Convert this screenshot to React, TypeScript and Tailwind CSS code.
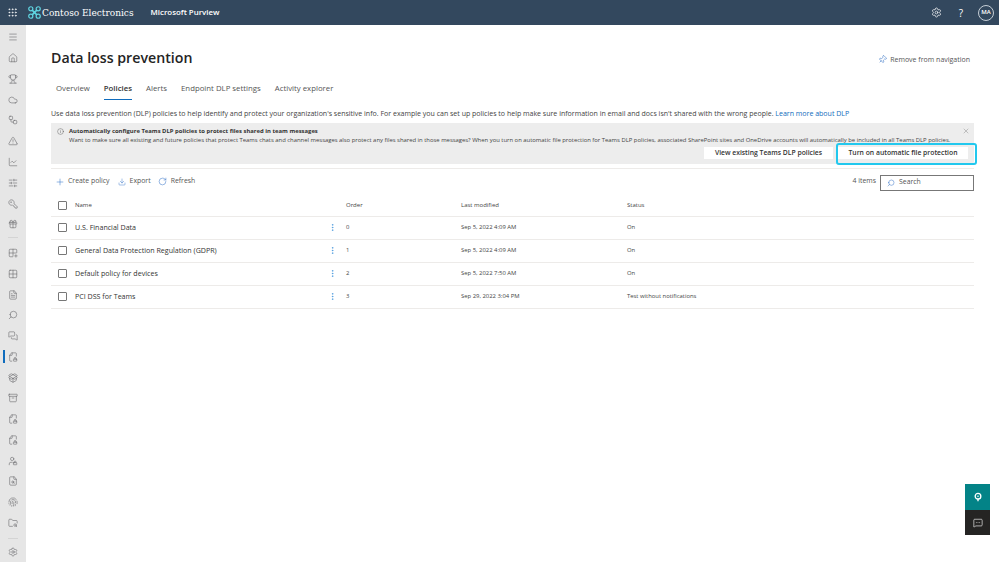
import {
  Archive, ChartLine, Cloud, FileLock2, FileSearch, FileText, Fingerprint, FolderSearch, Gift, Grid2x2, Grid2x2Plus,
  Grip, House, Info, KeyRound, Menu, MessageSquareMore, Pin, Plus, Download, RotateCw, Search, Settings,
  SlidersHorizontal, Trophy, TriangleAlert, UserLock, Workflow, X, MessagesSquare, PackageOpen, EllipsisVertical,
} from "lucide-react";

const topIcons = [House, Trophy, Cloud, Workflow, TriangleAlert, ChartLine, SlidersHorizontal, KeyRound, Gift];
const midIcons = [Grid2x2Plus, Grid2x2, FileText, Search, MessagesSquare];
const lowIcons = [PackageOpen, Archive, FileLock2, FileLock2, UserLock, FileSearch, Fingerprint, FolderSearch];
const flipped = [KeyRound, Search, FileLock2];

const policies = [
  { name: "U.S. Financial Data", order: 0, modified: "Sep 5, 2022 4:09 AM", status: "On" },
  { name: "General Data Protection Regulation (GDPR)", order: 1, modified: "Sep 5, 2022 4:09 AM", status: "On" },
  { name: "Default policy for devices", order: 2, modified: "Sep 5, 2022 7:50 AM", status: "On" },
  { name: "PCI DSS for Teams", order: 3, modified: "Sep 29, 2022 3:04 PM", status: "Test without notifications" },
];

function NavIcon({ icon: Icon, active }: { icon: typeof House; active?: boolean }) {
  return (
    <div className="relative flex h-[20.8px] w-full items-center justify-center">
      {active && <span className="absolute left-[3px] top-[4px] h-[13px] w-[2px] bg-[#0f6cbd]" />}
      <Icon size={10} strokeWidth={1.4} className={flipped.includes(Icon) ? "-scale-x-100 text-[#67676b]" : "text-[#67676b]"} />
    </div>
  );
}

function Checkbox() {
  return <span className="h-[9px] w-[9px] shrink-0 rounded-[1px] border border-[#777]" />;
}

function Row({ name, order, modified, status }: (typeof policies)[number]) {
  return (
    <div className="flex h-[23px] items-center border-b border-[#edebe9] pb-[1px] text-[5.9px] text-[#444]">
      <div className="flex w-[277px] shrink-0 items-center pl-[7px]">
        <Checkbox />
        <span className="ml-[8px] text-[7.1px] text-[#333]">{name}</span>
      </div>
      <EllipsisVertical size={9} strokeWidth={1.5} className="shrink-0 text-[#2b88d8]" />
      <span className="ml-[9px] w-[115px] shrink-0">{order}</span>
      <span className="w-[166px] shrink-0">{modified}</span>
      <span>{status}</span>
    </div>
  );
}

export default function App() {
  return (
    <div className="flex h-[562px] w-[999px] flex-col overflow-hidden bg-white font-['Open_Sans',sans-serif]">
      <header className="flex h-[25px] shrink-0 items-center bg-[#33485e] text-white">
        <Grip size={11} strokeWidth={1.6} className="ml-[7px]" />
        <svg viewBox="0 0 14 14" className="ml-[10px] h-[13px] w-[13px] text-[#5fd4e0]" fill="none" stroke="currentColor" strokeWidth="1.3">
          <circle cx="3" cy="3" r="2.2" />
          <circle cx="11" cy="3" r="2.2" />
          <circle cx="3" cy="11" r="2.2" />
          <circle cx="11" cy="11" r="2.2" />
          <path d="M4.5 4.5 9.5 9.5M9.5 4.5 4.5 9.5" strokeWidth="1.8" />
        </svg>
        <span className="ml-[1px] pt-[1px] font-['DejaVu_Serif',serif] text-[9px] leading-none">Contoso Electronics</span>
        <span className="ml-[17px] text-[7.9px] font-semibold">Microsoft Purview</span>
        <div className="ml-auto flex items-center">
          <Settings size={11} strokeWidth={1.5} />
          <span className="ml-[17px] text-[10px] leading-none">?</span>
          <span className="ml-[15px] mr-[5px] flex h-[16px] w-[16px] items-center justify-center rounded-full border border-[#c5ced6] text-[6px] font-semibold">MA</span>
        </div>
      </header>

      <div className="flex min-h-0 flex-1">
        <nav className="flex w-[26px] shrink-0 flex-col bg-[#e6e6e6] pt-[2px]">
          <NavIcon icon={Menu} />
          {topIcons.map((icon, i) => <NavIcon key={i} icon={icon} />)}
          <div className="mx-[8px] my-[2.5px] h-px bg-[#d4d4d4]" />
          <div className="mt-[2px]" />
          {midIcons.map((icon, i) => <NavIcon key={i} icon={icon} />)}
          <NavIcon icon={FileLock2} active />
          {lowIcons.map((icon, i) => <NavIcon key={i} icon={icon} />)}
          <div className="mx-[8px] mt-[5px] h-px bg-[#d4d4d4]" />
          <div className="mt-[2px]"><NavIcon icon={Settings} /></div>
        </nav>

        <main className="relative min-w-0 flex-1 pl-[25px] pr-[25px]">
          <div className="flex h-[43px] items-end justify-between">
            <h1 className="text-[14.2px] font-semibold leading-[20px] text-[#242424]">Data loss prevention</h1>
            <div className="mr-[4px] flex items-center gap-[3px] pb-[3px] text-[7px] text-[#555]">
              <Pin size={9} strokeWidth={1.4} className="rotate-45 text-[#2b6cc4]" />
              Remove from navigation
            </div>
          </div>

          <div className="mt-[7px] flex h-[27px] gap-[14px] pl-[5px] text-[7.8px] text-[#555]">
            <span className="pt-[8px]">Overview</span>
            <span className="relative pt-[8px] font-semibold text-[#333]">
              Policies
              <span className="absolute bottom-[2px] left-0 right-0 h-[1.5px] bg-[#0f6cbd]" />
            </span>
            <span className="pt-[8px]">Alerts</span>
            <span className="pt-[8px]">Endpoint DLP settings</span>
            <span className="pt-[8px]">Activity explorer</span>
          </div>

          <p className="mt-[4px] h-[15px] whitespace-nowrap text-[7.03px] leading-[15px] text-[#444]">
            Use data loss prevention (DLP) policies to help identify and protect your organization's sensitive info. For example you can set up policies to help make sure information in email and docs isn't shared with the wrong people. <span className="text-[#0f6cbd]">Learn more about DLP</span>
          </p>

          <section className="relative mt-[2px] flex h-[41px] w-[923px] bg-[#ededed] pl-[6px] pt-[4px]">
            <Info size={7} strokeWidth={1.3} className="mt-[1px] shrink-0 text-[#444]" />
            <div className="ml-[5px] min-w-0 flex-1">
              <p className="text-[5.9px] font-bold leading-[9px] text-[#333]">Automatically configure Teams DLP policies to protect files shared in team messages</p>
              <p className="whitespace-nowrap text-[5.9px] leading-[8px] text-[#444]">
                Want to make sure all existing and future policies that protect Teams chats and channel messages also protect any files shared in those messages? When you turn on automatic file protection for Teams DLP policies, associated SharePoint sites and OneDrive accounts will automatically be included in all Teams DLP policies.
              </p>
              <div className="mt-[3px] flex justify-end gap-[5px] pr-[6px] text-[6.8px] font-semibold text-[#333]">
                <button className="h-[12px] w-[129px] bg-white leading-[12px]">View existing Teams DLP policies</button>
                <div className="relative">
                  <button className="h-[12px] w-[130px] bg-white leading-[12px]">Turn on automatic file protection</button>
                  <span className="absolute -bottom-[6px] -left-[2px] -right-[9px] -top-[4px] rounded-[3px] border-2 border-[#22c8ee]" />
                </div>
              </div>
            </div>
            <X size={8} strokeWidth={1.2} className="absolute right-[4px] top-[4px] text-[#777]" />
          </section>

          <div className="mt-[4px] flex h-[26px] w-[923px] items-center border-t border-[#edebe9] pl-[4px] text-[6.9px] text-[#555]">
            <Plus size={10} strokeWidth={1.2} className="text-[#2b6cc4]" />
            <span className="ml-[3px]">Create policy</span>
            <Download size={8} strokeWidth={1.3} className="ml-[8px] text-[#2b6cc4]" />
            <span className="ml-[4px]">Export</span>
            <RotateCw size={9} strokeWidth={1.3} className="ml-[7px] text-[#2b6cc4]" />
            <span className="ml-[4px]">Refresh</span>
            <span className="ml-auto">4 items</span>
            <div className="ml-[4px] mt-[2px] flex h-[16px] w-[94px] items-center border border-[#777] pl-[6px]">
              <Search size={8} strokeWidth={1.4} className="-scale-x-100 text-[#2b6cc4]" />
              <span className="ml-[4px]">Search</span>
            </div>
          </div>

          <div className="w-[923px]">
            <div className="flex h-[23px] items-center border-b border-[#edebe9] text-[6px] font-medium text-[#444]">
              <div className="flex w-[295px] shrink-0 items-center pl-[7px]">
                <Checkbox />
                <span className="ml-[8px]">Name</span>
              </div>
              <span className="w-[115px] shrink-0">Order</span>
              <span className="w-[166px] shrink-0">Last modified</span>
              <span>Status</span>
            </div>
            {policies.map((p) => <Row key={p.name} {...p} />)}
          </div>

          <div className="absolute bottom-[27px] right-[9px] flex w-[25px] flex-col">
            <div className="flex h-[26px] items-center justify-center bg-[#038387] text-white">
              <svg viewBox="0 0 12 12" className="h-[10px] w-[10px]" fill="none" stroke="currentColor" strokeWidth="1.6">
                <circle cx="6" cy="5" r="3.4" />
                <path d="M6 8.5V11" />
                <circle cx="6" cy="5" r="0.6" fill="currentColor" strokeWidth="0.6" />
              </svg>
            </div>
            <div className="flex h-[25px] items-center justify-center bg-[#252423] text-white">
              <MessageSquareMore size={10} strokeWidth={1.5} />
            </div>
          </div>
        </main>
      </div>
    </div>
  );
}
